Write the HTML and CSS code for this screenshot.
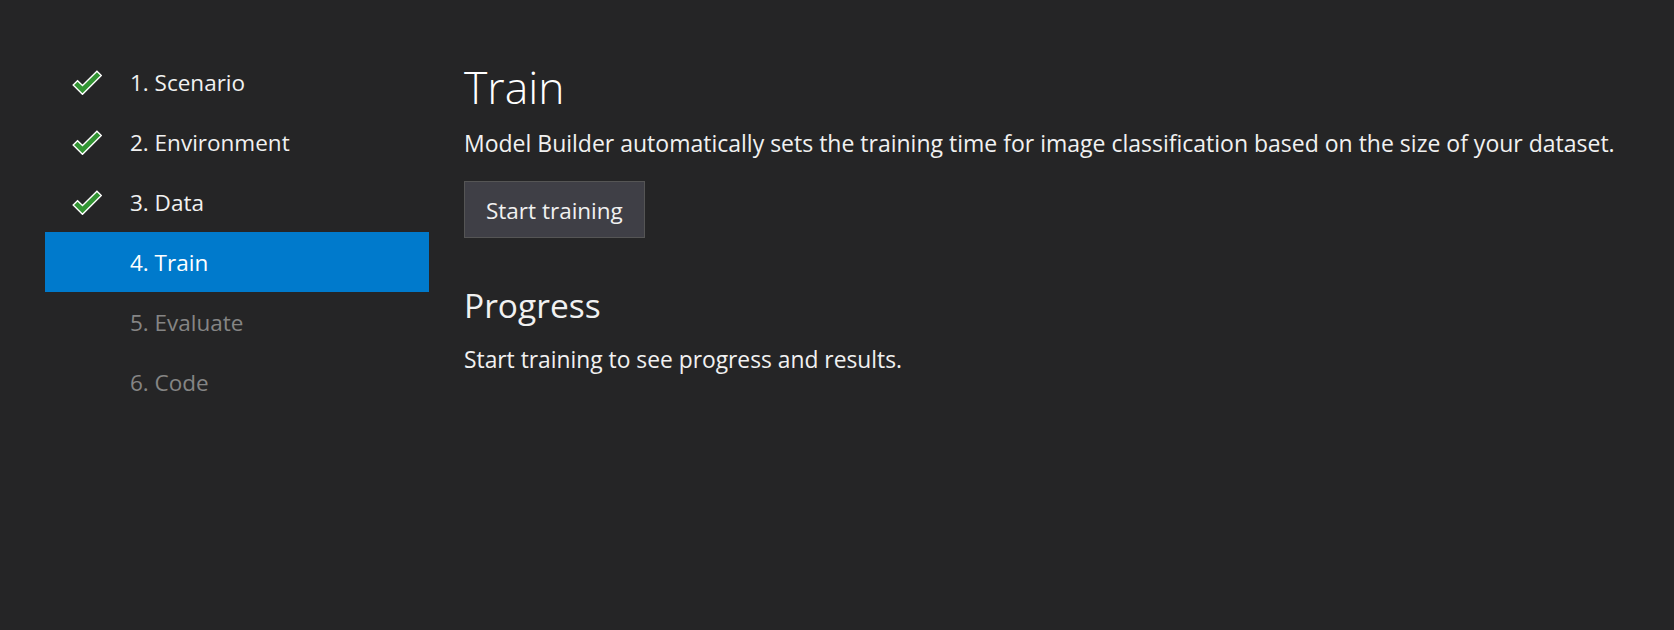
FILE: index.html
```html
<!DOCTYPE html>
<html lang="en">
<head>
<meta charset="utf-8">
<title>Model Builder - Train</title>
<link rel="stylesheet" href="styles.css">
</head>
<body>
<div class="page">
  <nav class="steps">
    <div class="step done">
      <span class="step-icon"><svg width="30" height="25" viewBox="0 0 30 25"><polygon points="1.2,15.05 10.5,24.3 29.3,5.55 24.95,1.2 10.5,15.6 5.55,10.7" fill="#339433" stroke="#ffffff" stroke-width="1.4" stroke-linejoin="miter"/></svg></span>
      <span class="step-label">1. Scenario</span>
    </div>
    <div class="step done">
      <span class="step-icon"><svg width="30" height="25" viewBox="0 0 30 25"><polygon points="1.2,15.05 10.5,24.3 29.3,5.55 24.95,1.2 10.5,15.6 5.55,10.7" fill="#339433" stroke="#ffffff" stroke-width="1.4" stroke-linejoin="miter"/></svg></span>
      <span class="step-label">2. Environment</span>
    </div>
    <div class="step done">
      <span class="step-icon"><svg width="30" height="25" viewBox="0 0 30 25"><polygon points="1.2,15.05 10.5,24.3 29.3,5.55 24.95,1.2 10.5,15.6 5.55,10.7" fill="#339433" stroke="#ffffff" stroke-width="1.4" stroke-linejoin="miter"/></svg></span>
      <span class="step-label">3. Data</span>
    </div>
    <div class="step active">
      <span class="step-icon"></span>
      <span class="step-label">4. Train</span>
    </div>
    <div class="step disabled">
      <span class="step-icon"></span>
      <span class="step-label">5. Evaluate</span>
    </div>
    <div class="step disabled">
      <span class="step-icon"></span>
      <span class="step-label">6. Code</span>
    </div>
  </nav>
  <main class="content">
    <h1 class="title">Train</h1>
    <p class="desc">Model Builder automatically sets the training time for image classification based on the size of your dataset.</p>
    <button class="btn" type="button">Start training</button>
    <h2 class="subtitle">Progress</h2>
    <p class="desc body">Start training to see progress and results.</p>
  </main>
</div>
</body>
</html>
```
FILE: styles.css
```css
html, body {
  margin: 0;
  padding: 0;
  background: #252526;
}

body {
  font-family: "Open Sans", "Noto Sans", "Liberation Sans", sans-serif;
  color: #f1f1f1;
  width: 1674px;
  height: 630px;
  overflow: hidden;
}

.page {
  display: flex;
  padding-top: 52px;
  padding-left: 45px;
}

.steps {
  width: 384px;
  flex: none;
  display: flex;
  flex-direction: column;
}

.step {
  height: 60px;
  box-sizing: border-box;
  padding-top: 2px;
  display: flex;
  align-items: center;
  font-size: 22.5px;
  line-height: 30px;
}

.step-icon {
  width: 85px;
  flex: none;
  display: flex;
  align-items: center;
}

.step-icon svg {
  display: block;
  margin-left: 27px;
  margin-top: -2px;
}

.step.active {
  background: #007acc;
  color: #ffffff;
}

.step.disabled {
  color: #858585;
}

.content {
  padding-left: 35px;
  padding-top: 7px;
  display: flex;
  flex-direction: column;
  align-items: flex-start;
}

.title {
  margin: 0;
  font-size: 44.5px;
  font-weight: 300;
  line-height: 56px;
  color: #ffffff;
}

.desc {
  margin: 13px 0 0;
  font-size: 23px;
  line-height: 30px;
}

.btn {
  margin-top: 23px;
  font-family: inherit;
  font-size: 22.5px;
  line-height: 30px;
  color: #f1f1f1;
  background: #3f3f46;
  border: 1px solid #555555;
  padding: 14px 21px 11px;
  border-radius: 0;
}

.subtitle {
  margin: 45px 0 0;
  font-size: 33.5px;
  font-weight: 400;
  line-height: 44px;
  color: #f1f1f1;
}

.body {
  margin-top: 18px;
  font-size: 22.8px;
}
```
